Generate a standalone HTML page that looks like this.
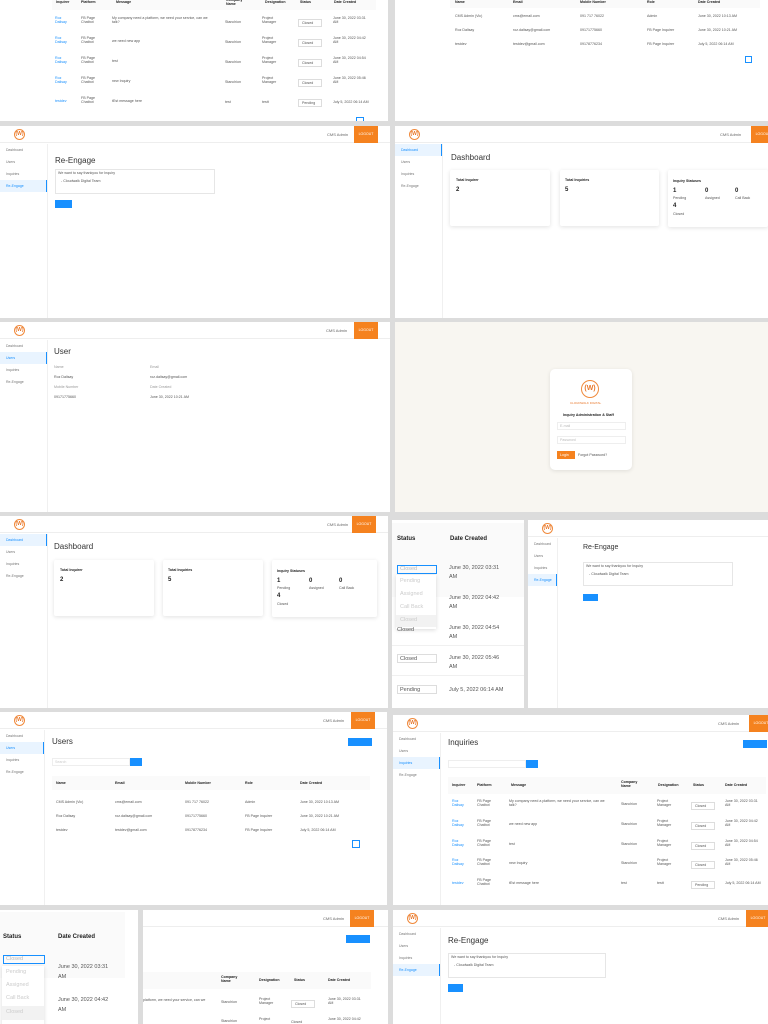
<!DOCTYPE html>
<html><head><meta charset="utf-8">
<style>
*{box-sizing:border-box;margin:0;padding:0}
body{width:768px;height:1024px;background:#dcdcdc;position:relative;overflow:hidden;font-family:"Liberation Sans",sans-serif;color:#333}
.p{position:absolute;background:#fff;overflow:hidden}
.hd{position:absolute;left:0;right:0;top:0;height:17px;background:#fff;border-bottom:1px solid #eee}
.logo{position:absolute;left:14px;top:3px;width:11px;height:11px;border:1px solid #f08a3c;border-radius:50%;font-size:5px;color:#e8772a;text-align:center;line-height:9px;font-weight:bold}
.adm{position:absolute;top:6px;font-size:4px;color:#666}
.ob{position:absolute;top:0;width:24px;height:17px;background:#f5821f;color:#fff;font-size:3.5px;text-align:center;line-height:17px}
.sb{position:absolute;left:0;top:18px;width:48px;bottom:0;border-right:1px solid #f0f0f0}
.si{height:12px;font-size:3.5px;color:#777;line-height:12px;padding-left:6px}
.si.a{background:#e9f4ff;border-right:1.5px solid #1890ff;color:#1890ff}
.t{position:absolute;font-size:8px;color:#333}
.card{position:absolute;background:#fff;box-shadow:0 1px 4px rgba(0,0,0,.12);border-radius:2px}
.s{position:absolute;font-size:3.6px;color:#555;white-space:nowrap}
.b{font-weight:bold;color:#222}
.blue{background:#1890ff;position:absolute}
.th{position:absolute;background:#fafafa;height:14px}
.ln{position:absolute;height:1px;background:#f0f0f0}
</style></head><body>

<!-- Row1 left: inquiries table bottom -->
<div class="p" style="left:0;top:0;width:388px;height:121px">
 <div class="th" style="left:52px;top:0;width:324px;height:10px"></div>
 <div class="s b" style="left:56px;top:0">Inquirer</div><div class="s b" style="left:81px;top:0">Platform</div><div class="s b" style="left:116px;top:0">Message</div><div class="s b" style="left:226px;top:-2px">Company<br>Name</div><div class="s b" style="left:265px;top:0">Designation</div><div class="s b" style="left:300px;top:0">Status</div><div class="s b" style="left:334px;top:0">Date Created</div>
 <div class="s" style="left:55px;top:16px;color:#1890ff">Roz<br>Dalisay</div><div class="s" style="left:81px;top:16px">FB Page<br>Chatbot</div><div class="s" style="left:112px;top:16px">My company need a platform, we need your service, can we<br>talk?</div><div class="s" style="left:225px;top:20px">Stanchion</div><div class="s" style="left:262px;top:16px">Project<br>Manager</div><div class="s" style="left:298px;top:19px;border:1px solid #ddd;padding:1px 3px;width:24px">Closed</div><div class="s" style="left:333px;top:16px">June 30, 2022 03:31<br>AM</div>
 <div class="s" style="left:55px;top:36px;color:#1890ff">Roz<br>Dalisay</div><div class="s" style="left:81px;top:36px">FB Page<br>Chatbot</div><div class="s" style="left:112px;top:39px">we need new app</div><div class="s" style="left:225px;top:40px">Stanchion</div><div class="s" style="left:262px;top:36px">Project<br>Manager</div><div class="s" style="left:298px;top:39px;border:1px solid #ddd;padding:1px 3px;width:24px">Closed</div><div class="s" style="left:333px;top:36px">June 30, 2022 04:42<br>AM</div>
 <div class="s" style="left:55px;top:56px;color:#1890ff">Roz<br>Dalisay</div><div class="s" style="left:81px;top:56px">FB Page<br>Chatbot</div><div class="s" style="left:112px;top:59px">test</div><div class="s" style="left:225px;top:60px">Stanchion</div><div class="s" style="left:262px;top:56px">Project<br>Manager</div><div class="s" style="left:298px;top:59px;border:1px solid #ddd;padding:1px 3px;width:24px">Closed</div><div class="s" style="left:333px;top:56px">June 30, 2022 04:54<br>AM</div>
 <div class="s" style="left:55px;top:76px;color:#1890ff">Roz<br>Dalisay</div><div class="s" style="left:81px;top:76px">FB Page<br>Chatbot</div><div class="s" style="left:112px;top:79px">new Inquiry</div><div class="s" style="left:225px;top:80px">Stanchion</div><div class="s" style="left:262px;top:76px">Project<br>Manager</div><div class="s" style="left:298px;top:79px;border:1px solid #ddd;padding:1px 3px;width:24px">Closed</div><div class="s" style="left:333px;top:76px">June 30, 2022 05:46<br>AM</div>
 <div class="s" style="left:55px;top:99px;color:#1890ff">testdev</div><div class="s" style="left:81px;top:96px">FB Page<br>Chatbot</div><div class="s" style="left:112px;top:99px">tEst message here</div><div class="s" style="left:225px;top:100px">test</div><div class="s" style="left:262px;top:100px">testt</div><div class="s" style="left:298px;top:99px;border:1px solid #ddd;padding:1px 3px;width:24px">Pending</div><div class="s" style="left:333px;top:100px">July 5, 2022 06:14 AM</div>
 <div style="position:absolute;left:356px;top:117px;width:8px;height:6px;border:1px solid #1890ff"></div>
</div>

<!-- Row1 right: users table bottom -->
<div class="p" style="left:395px;top:0;width:373px;height:121px">
 <div class="th" style="left:55px;top:0;width:310px;height:8px"></div>
 <div class="s b" style="left:60px;top:0">Name</div><div class="s b" style="left:118px;top:0">Email</div><div class="s b" style="left:185px;top:0">Mobile Number</div><div class="s b" style="left:252px;top:0">Role</div><div class="s b" style="left:303px;top:0">Date Created</div>
 <div class="s" style="left:60px;top:14px">CMS Admin (Vic)</div><div class="s" style="left:118px;top:14px">cms@email.com</div><div class="s" style="left:185px;top:14px">091 717 76022</div><div class="s" style="left:252px;top:14px">Admin</div><div class="s" style="left:303px;top:14px">June 30, 2022 10:13 AM</div>
 <div class="s" style="left:60px;top:28px">Roz Dalisay</div><div class="s" style="left:118px;top:28px">roz.dalisay@gmail.com</div><div class="s" style="left:185px;top:28px">09171775660</div><div class="s" style="left:252px;top:28px">FB Page Inquirer</div><div class="s" style="left:303px;top:28px">June 30, 2022 10:21 AM</div>
 <div class="s" style="left:60px;top:42px">testdev</div><div class="s" style="left:118px;top:42px">testdev@gmail.com</div><div class="s" style="left:185px;top:42px">09178776234</div><div class="s" style="left:252px;top:42px">FB Page Inquirer</div><div class="s" style="left:303px;top:42px">July 5, 2022 06:14 AM</div>
 <div style="position:absolute;left:350px;top:56px;width:7px;height:7px;border:1px solid #1890ff"></div>
</div>

<!-- Row2 left: Re-Engage -->
<div class="p" style="left:0;top:126px;width:390px;height:192px">
 <div class="hd"><div class="logo">(W)</div><div class="adm" style="left:327px">CMS Admin</div><div class="ob" style="left:354px">LOGOUT</div></div>
 <div class="sb"><div class="si">Dashboard</div><div class="si">Users</div><div class="si">Inquiries</div><div class="si a">Re-Engage</div></div>
 <div class="t" style="left:55px;top:30px">Re-Engage</div>
 <div style="position:absolute;left:55px;top:43px;width:160px;height:25px;border:1px solid #e6e6e6"></div>
 <div class="s" style="left:58px;top:45px">We want to say thankyou for Inquiry<br><br>&nbsp;&nbsp;&nbsp;- Cloudwalk Digital Team</div>
 <div class="blue" style="left:55px;top:74px;width:17px;height:8px"></div>
</div>

<!-- Row2 right: Dashboard -->
<div class="p" style="left:395px;top:126px;width:373px;height:192px">
 <div class="hd"><div class="logo">(W)</div><div class="adm" style="left:325px">CMS Admin</div><div class="ob" style="left:356px">LOGOUT</div></div>
 <div class="sb" style="width:48px"><div class="si a">Dashboard</div><div class="si">Users</div><div class="si">Inquiries</div><div class="si">Re-Engage</div></div>
 <div class="t" style="left:56px;top:27px">Dashboard</div>
 <div class="card" style="left:55px;top:44px;width:100px;height:56px"><div class="s b" style="left:6px;top:8px">Total Inquirer</div><div class="s b" style="left:6px;top:17px;font-size:6px">2</div></div>
 <div class="card" style="left:165px;top:44px;width:99px;height:56px"><div class="s b" style="left:5px;top:8px">Total Inquiries</div><div class="s b" style="left:5px;top:17px;font-size:6px">5</div></div>
 <div class="card" style="left:273px;top:44px;width:100px;height:57px"><div class="s b" style="left:5px;top:9px">Inquiry Statuses</div><div class="s b" style="left:5px;top:18px;font-size:6px">1</div><div class="s" style="left:5px;top:26px">Pending</div><div class="s b" style="left:37px;top:18px;font-size:6px">0</div><div class="s" style="left:37px;top:26px">Assigned</div><div class="s b" style="left:67px;top:18px;font-size:6px">0</div><div class="s" style="left:67px;top:26px">Call Back</div><div class="s b" style="left:5px;top:33px;font-size:6px">4</div><div class="s" style="left:5px;top:42px">Closed</div></div>
</div>

<!-- Row3 left: User detail -->
<div class="p" style="left:0;top:322px;width:390px;height:190px">
 <div class="hd"><div class="logo">(W)</div><div class="adm" style="left:326px">CMS Admin</div><div class="ob" style="left:354px">LOGOUT</div></div>
 <div class="sb"><div class="si">Dashboard</div><div class="si a">Users</div><div class="si">Inquiries</div><div class="si">Re-Engage</div></div>
 <div class="t" style="left:54px;top:25px">User</div>
 <div class="s" style="left:54px;top:43px;color:#999">Name</div><div class="s" style="left:150px;top:43px;color:#999">Email</div>
 <div class="s" style="left:54px;top:53px">Roz Dalisay</div><div class="s" style="left:150px;top:53px">roz.dalisay@gmail.com</div>
 <div class="s" style="left:54px;top:63px;color:#999">Mobile Number</div><div class="s" style="left:150px;top:63px;color:#999">Date Created</div>
 <div class="s" style="left:54px;top:73px">09171775660</div><div class="s" style="left:150px;top:73px">June 30, 2022 10:21 AM</div>
</div>

<!-- Row3 right: Login -->
<div class="p" style="left:395px;top:322px;width:373px;height:190px;background:#f8f6f1">
 <div style="position:absolute;left:155px;top:47px;width:82px;height:101px;background:#fff;border-radius:5px;box-shadow:0 1px 4px rgba(0,0,0,.1)">
  <div class="logo" style="left:31px;top:11px;width:18px;height:18px;line-height:16px;font-size:7px">(W)</div>
  <div class="s" style="left:20px;top:32px;color:#e8772a;font-size:3px">CLOUDWALK DIGITAL</div>
  <div class="s b" style="left:13px;top:44px">Inquiry Administration &amp; Staff</div>
  <div style="position:absolute;left:7px;top:53px;width:69px;height:8px;border:1px solid #eee"></div><div class="s" style="left:10px;top:55px;color:#bbb">E-mail</div>
  <div style="position:absolute;left:7px;top:67px;width:69px;height:8px;border:1px solid #eee"></div><div class="s" style="left:10px;top:69px;color:#bbb">Password</div>
  <div style="position:absolute;left:7px;top:82px;width:18px;height:8px;background:#f5821f"></div><div class="s" style="left:10px;top:84px;color:#fff">Login</div>
  <div class="s" style="left:28px;top:84px">Forgot Password?</div>
 </div>
</div>

<!-- Row4 left: Dashboard -->
<div class="p" style="left:0;top:516px;width:388px;height:192px">
 <div class="hd"><div class="logo">(W)</div><div class="adm" style="left:327px">CMS Admin</div><div class="ob" style="left:352px">LOGOUT</div></div>
 <div class="sb"><div class="si a">Dashboard</div><div class="si">Users</div><div class="si">Inquiries</div><div class="si">Re-Engage</div></div>
 <div class="t" style="left:54px;top:26px">Dashboard</div>
 <div class="card" style="left:54px;top:44px;width:100px;height:56px"><div class="s b" style="left:6px;top:8px">Total Inquirer</div><div class="s b" style="left:6px;top:17px;font-size:6px">2</div></div>
 <div class="card" style="left:163px;top:44px;width:100px;height:56px"><div class="s b" style="left:5px;top:8px">Total Inquiries</div><div class="s b" style="left:5px;top:17px;font-size:6px">5</div></div>
 <div class="card" style="left:272px;top:44px;width:105px;height:57px"><div class="s b" style="left:5px;top:9px">Inquiry Statuses</div><div class="s b" style="left:5px;top:18px;font-size:6px">1</div><div class="s" style="left:5px;top:26px">Pending</div><div class="s b" style="left:37px;top:18px;font-size:6px">0</div><div class="s" style="left:37px;top:26px">Assigned</div><div class="s b" style="left:67px;top:18px;font-size:6px">0</div><div class="s" style="left:67px;top:26px">Call Back</div><div class="s b" style="left:5px;top:33px;font-size:6px">4</div><div class="s" style="left:5px;top:42px">Closed</div></div>
</div>

<!-- Row4 mid: dropdown zoom -->
<div class="p" style="left:392px;top:520px;width:132px;height:188px">
 <div style="position:absolute;left:0;top:3px;width:132px;height:36px;background:#fafafa"></div>
 <div class="s b" style="left:5px;top:16px;font-size:6px">Status</div><div class="s b" style="left:58px;top:16px;font-size:6px">Date Created</div>
 <div style="position:absolute;left:0;top:39px;width:132px;height:38px;background:#fafafa"></div>
 <div style="position:absolute;left:5px;top:45px;width:40px;height:9px;border:1px solid #1890ff"></div><div class="s" style="left:8px;top:46px;font-size:5.5px;color:#bbb">Closed</div>
 <div style="position:absolute;left:4px;top:55px;width:40px;height:54px;background:#fff;box-shadow:0 1px 4px rgba(0,0,0,.15)"></div>
 <div class="s" style="left:8px;top:58px;font-size:5.5px;color:#ccc">Pending</div>
 <div class="s" style="left:8px;top:71px;font-size:5.5px;color:#ccc">Assigned</div>
 <div class="s" style="left:8px;top:84px;font-size:5.5px;color:#ccc">Call Back</div>
 <div style="position:absolute;left:4px;top:95px;width:40px;height:12px;background:#f2f2f2"></div><div class="s" style="left:8px;top:97px;font-size:5.5px;color:#ccc">Closed</div>
 <div class="s" style="left:5px;top:107px;font-size:5.5px">Closed</div>
 <div class="s" style="left:57px;top:44px;font-size:5.5px;line-height:9px">June 30, 2022 03:31<br>AM</div>
 <div class="s" style="left:57px;top:74px;font-size:5.5px;line-height:9px">June 30, 2022 04:42<br>AM</div>
 <div class="s" style="left:57px;top:104px;font-size:5.5px;line-height:9px">June 30, 2022 04:54<br>AM</div>
 <div class="ln" style="left:0;top:125px;width:132px"></div>
 <div style="position:absolute;left:5px;top:134px;width:40px;height:9px;border:1px solid #ddd"></div><div class="s" style="left:8px;top:136px;font-size:5.5px">Closed</div>
 <div class="s" style="left:57px;top:134px;font-size:5.5px;line-height:9px">June 30, 2022 05:46<br>AM</div>
 <div class="ln" style="left:0;top:155px;width:132px"></div>
 <div style="position:absolute;left:5px;top:165px;width:40px;height:9px;border:1px solid #ddd"></div><div class="s" style="left:8px;top:167px;font-size:5.5px">Pending</div>
 <div class="s" style="left:57px;top:167px;font-size:5.5px">July 5, 2022 06:14 AM</div>
</div>

<!-- Row4 right: Re-Engage -->
<div class="p" style="left:528px;top:520px;width:240px;height:188px">
 <div class="hd"><div class="logo">(W)</div></div>
 <div class="sb" style="width:30px"><div class="si">Dashboard</div><div class="si">Users</div><div class="si">Inquiries</div><div class="si a">Re-Engage</div></div>
 <div class="t" style="left:55px;top:24px;font-size:7px">Re-Engage</div>
 <div style="position:absolute;left:55px;top:42px;width:150px;height:24px;border:1px solid #e6e6e6"></div>
 <div class="s" style="left:58px;top:44px">We want to say thankyou for Inquiry<br><br>&nbsp;&nbsp;&nbsp;- Cloudwalk Digital Team</div>
 <div class="blue" style="left:55px;top:74px;width:15px;height:7px"></div>
</div>

<!-- Row5 left: Users -->
<div class="p" style="left:0;top:712px;width:387px;height:193px">
 <div class="hd"><div class="logo">(W)</div><div class="adm" style="left:323px">CMS Admin</div><div class="ob" style="left:351px">LOGOUT</div></div>
 <div class="sb" style="width:45px"><div class="si">Dashboard</div><div class="si a">Users</div><div class="si">Inquiries</div><div class="si">Re-Engage</div></div>
 <div class="t" style="left:52px;top:25px">Users</div>
 <div class="blue" style="left:348px;top:26px;width:24px;height:8px"></div>
 <div style="position:absolute;left:52px;top:46px;width:78px;height:8px;border:1px solid #eee"></div><div class="s" style="left:55px;top:48px;color:#ccc">Search</div>
 <div class="blue" style="left:130px;top:46px;width:12px;height:8px"></div>
 <div class="th" style="left:52px;top:64px;width:318px"></div>
 <div class="s b" style="left:56px;top:69px">Name</div><div class="s b" style="left:115px;top:69px">Email</div><div class="s b" style="left:185px;top:69px">Mobile Number</div><div class="s b" style="left:245px;top:69px">Role</div><div class="s b" style="left:300px;top:69px">Date Created</div>
 <div class="s" style="left:56px;top:88px">CMS Admin (Vic)</div><div class="s" style="left:115px;top:88px">cms@email.com</div><div class="s" style="left:185px;top:88px">091 717 76022</div><div class="s" style="left:245px;top:88px">Admin</div><div class="s" style="left:300px;top:88px">June 30, 2022 10:13 AM</div>
 <div class="s" style="left:56px;top:102px">Roz Dalisay</div><div class="s" style="left:115px;top:102px">roz.dalisay@gmail.com</div><div class="s" style="left:185px;top:102px">09171775660</div><div class="s" style="left:245px;top:102px">FB Page Inquirer</div><div class="s" style="left:300px;top:102px">June 30, 2022 10:21 AM</div>
 <div class="s" style="left:56px;top:116px">testdev</div><div class="s" style="left:115px;top:116px">testdev@gmail.com</div><div class="s" style="left:185px;top:116px">09178776234</div><div class="s" style="left:245px;top:116px">FB Page Inquirer</div><div class="s" style="left:300px;top:116px">July 5, 2022 06:14 AM</div>
 <div style="position:absolute;left:352px;top:128px;width:8px;height:8px;border:1px solid #1890ff"></div>
</div>

<!-- Row5 right: Inquiries -->
<div class="p" style="left:393px;top:715px;width:375px;height:190px">
 <div class="hd"><div class="logo">(W)</div><div class="adm" style="left:325px">CMS Admin</div><div class="ob" style="left:356px">LOGOUT</div></div>
 <div class="sb"><div class="si">Dashboard</div><div class="si">Users</div><div class="si a">Inquiries</div><div class="si">Re-Engage</div></div>
 <div class="t" style="left:55px;top:23px">Inquiries</div>
 <div class="blue" style="left:350px;top:25px;width:24px;height:8px"></div>
 <div style="position:absolute;left:55px;top:45px;width:78px;height:8px;border:1px solid #eee"></div>
 <div class="blue" style="left:133px;top:45px;width:12px;height:8px"></div>
 <div class="th" style="left:55px;top:62px;width:318px;height:17px"></div>
 <div class="s b" style="left:59px;top:68px">Inquirer</div><div class="s b" style="left:84px;top:68px">Platform</div><div class="s b" style="left:118px;top:68px">Message</div><div class="s b" style="left:228px;top:65px">Company<br>Name</div><div class="s b" style="left:265px;top:68px">Designation</div><div class="s b" style="left:300px;top:68px">Status</div><div class="s b" style="left:332px;top:68px">Date Created</div>
 <div class="s" style="left:59px;top:84px;color:#1890ff">Roz<br>Dalisay</div><div class="s" style="left:84px;top:84px">FB Page<br>Chatbot</div><div class="s" style="left:116px;top:84px">My company need a platform, we need your service, can we<br>talk?</div><div class="s" style="left:228px;top:87px">Stanchion</div><div class="s" style="left:264px;top:84px">Project<br>Manager</div><div class="s" style="left:298px;top:87px;border:1px solid #ddd;padding:1px 3px;width:24px">Closed</div><div class="s" style="left:332px;top:84px">June 30, 2022 03:31<br>AM</div>
 <div class="s" style="left:59px;top:104px;color:#1890ff">Roz<br>Dalisay</div><div class="s" style="left:84px;top:104px">FB Page<br>Chatbot</div><div class="s" style="left:116px;top:107px">we need new app</div><div class="s" style="left:228px;top:107px">Stanchion</div><div class="s" style="left:264px;top:104px">Project<br>Manager</div><div class="s" style="left:298px;top:107px;border:1px solid #ddd;padding:1px 3px;width:24px">Closed</div><div class="s" style="left:332px;top:104px">June 30, 2022 04:42<br>AM</div>
 <div class="s" style="left:59px;top:124px;color:#1890ff">Roz<br>Dalisay</div><div class="s" style="left:84px;top:124px">FB Page<br>Chatbot</div><div class="s" style="left:116px;top:127px">test</div><div class="s" style="left:228px;top:127px">Stanchion</div><div class="s" style="left:264px;top:124px">Project<br>Manager</div><div class="s" style="left:298px;top:127px;border:1px solid #ddd;padding:1px 3px;width:24px">Closed</div><div class="s" style="left:332px;top:124px">June 30, 2022 04:54<br>AM</div>
 <div class="s" style="left:59px;top:143px;color:#1890ff">Roz<br>Dalisay</div><div class="s" style="left:84px;top:143px">FB Page<br>Chatbot</div><div class="s" style="left:116px;top:146px">new Inquiry</div><div class="s" style="left:228px;top:146px">Stanchion</div><div class="s" style="left:264px;top:143px">Project<br>Manager</div><div class="s" style="left:298px;top:146px;border:1px solid #ddd;padding:1px 3px;width:24px">Closed</div><div class="s" style="left:332px;top:143px">June 30, 2022 05:46<br>AM</div>
 <div class="s" style="left:59px;top:166px;color:#1890ff">testdev</div><div class="s" style="left:84px;top:163px">FB Page<br>Chatbot</div><div class="s" style="left:116px;top:166px">tEst message here</div><div class="s" style="left:228px;top:166px">test</div><div class="s" style="left:264px;top:166px">testt</div><div class="s" style="left:298px;top:166px;border:1px solid #ddd;padding:1px 3px;width:24px">Pending</div><div class="s" style="left:332px;top:166px">July 5, 2022 06:14 AM</div>
</div>

<!-- Row6 left: dropdown zoom -->
<div class="p" style="left:0;top:910px;width:138px;height:114px">
 <div style="position:absolute;left:0;top:2px;width:125px;height:36px;background:#fafafa"></div>
 <div class="s b" style="left:3px;top:24px;font-size:6px">Status</div><div class="s b" style="left:58px;top:24px;font-size:6px">Date Created</div>
 <div style="position:absolute;left:0;top:38px;width:125px;height:30px;background:#fafafa"></div>
 <div style="position:absolute;left:3px;top:45px;width:42px;height:9px;border:1px solid #1890ff"></div><div class="s" style="left:6px;top:46px;font-size:5.5px;color:#bbb">Closed</div>
 <div style="position:absolute;left:2px;top:56px;width:42px;height:60px;background:#fff;box-shadow:0 1px 4px rgba(0,0,0,.15)"></div>
 <div class="s" style="left:6px;top:59px;font-size:5.5px;color:#ccc">Pending</div>
 <div class="s" style="left:6px;top:72px;font-size:5.5px;color:#ccc">Assigned</div>
 <div class="s" style="left:6px;top:85px;font-size:5.5px;color:#ccc">Call Back</div>
 <div style="position:absolute;left:2px;top:96px;width:42px;height:14px;background:#f2f2f2"></div><div class="s" style="left:6px;top:99px;font-size:5.5px;color:#ccc">Closed</div>
 <div class="s" style="left:58px;top:52px;font-size:5.5px;line-height:10px">June 30, 2022 03:31<br>AM</div>
 <div class="s" style="left:58px;top:85px;font-size:5.5px;line-height:10px">June 30, 2022 04:42<br>AM</div>
 <div class="s" style="left:58px;top:115px;font-size:5.5px">June 30, 2022 04:54</div>
</div>

<!-- Row6 mid: inquiries partial -->
<div class="p" style="left:143px;top:910px;width:245px;height:114px">
 <div class="hd"><div class="adm" style="left:180px">CMS Admin</div><div class="ob" style="left:207px">LOGOUT</div></div>
 <div class="blue" style="left:203px;top:25px;width:24px;height:8px"></div>
 <div class="th" style="left:0;top:62px;width:228px;height:17px"></div>
 <div class="s b" style="left:78px;top:65px">Company<br>Name</div><div class="s b" style="left:116px;top:68px">Designation</div><div class="s b" style="left:151px;top:68px">Status</div><div class="s b" style="left:185px;top:68px">Date Created</div>
 <div class="s" style="left:0;top:88px">platform, we need your service, can we</div><div class="s" style="left:78px;top:90px">Stanchion</div><div class="s" style="left:116px;top:87px">Project<br>Manager</div><div class="s" style="left:148px;top:90px;border:1px solid #ddd;padding:1px 3px;width:24px">Closed</div><div class="s" style="left:185px;top:87px">June 30, 2022 03:31<br>AM</div>
 <div class="s" style="left:78px;top:109px">Stanchion</div><div class="s" style="left:116px;top:107px">Project</div><div class="s" style="left:148px;top:110px">Closed</div><div class="s" style="left:185px;top:107px">June 30, 2022 04:42</div>
</div>

<!-- Row6 right: Re-Engage -->
<div class="p" style="left:393px;top:910px;width:375px;height:114px">
 <div class="hd"><div class="logo">(W)</div><div class="adm" style="left:325px">CMS Admin</div><div class="ob" style="left:353px">LOGOUT</div></div>
 <div class="sb"><div class="si">Dashboard</div><div class="si">Users</div><div class="si">Inquiries</div><div class="si a">Re-Engage</div></div>
 <div class="t" style="left:55px;top:26px">Re-Engage</div>
 <div style="position:absolute;left:55px;top:43px;width:158px;height:25px;border:1px solid #e6e6e6"></div>
 <div class="s" style="left:58px;top:45px">We want to say thankyou for Inquiry<br><br>&nbsp;&nbsp;&nbsp;- Cloudwalk Digital Team</div>
 <div class="blue" style="left:55px;top:74px;width:15px;height:8px"></div>
</div>

</body></html>
